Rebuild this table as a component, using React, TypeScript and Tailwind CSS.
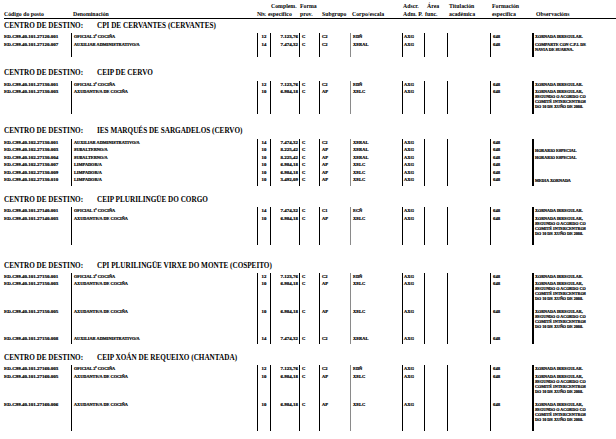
import React from "react";

type Row = {
  code: string;
  den: string;
  niv: string;
  comp: string;
  sub: string;
  corpo: string;
  obs: string[];
  h: string;
};

type Section = {
  name: string;
  mt: string;
  gap: string;
  rows: Row[];
};

const LONG_OBS = [
  "XORNADA IRREGULAR,",
  "SEGUNDO O ACORDO CO",
  "COMITÉ INTERCENTROS",
  "DO 10 DE XUÑO DE 2008.",
];

const sections: Section[] = [
  {
    name: "CPI DE CERVANTES (CERVANTES)",
    mt: "mt-[2.5px]",
    gap: "mb-[2px]",
    rows: [
      { code: "ED.C99.40.101.27120.001", den: "OFICIAL 2ª COCIÑA", niv: "12", comp: "7.123,76", sub: "C2", corpo: "EDÑ", obs: ["XORNADA IRREGULAR."], h: "h-[8px]" },
      { code: "ED.C99.40.101.27120.007", den: "AUXILIAR ADMINISTRATIVO/A", niv: "14", comp: "7.474,32", sub: "C2", corpo: "XERAL", obs: ["COMPARTE CON C.P.I. DE", "NAVIA DE SUARNA."], h: "h-[16.5px]" },
    ],
  },
  {
    name: "CEIP DE CERVO",
    mt: "mt-[12px]",
    gap: "mb-[2.5px]",
    rows: [
      { code: "ED.C99.40.101.27130.001", den: "OFICIAL 2ª COCIÑA", niv: "12", comp: "7.123,76", sub: "C2", corpo: "EDÑ", obs: ["XORNADA IRREGULAR."], h: "h-[7.5px]" },
      { code: "ED.C99.40.101.27130.003", den: "AXUDANTE/A DE COCIÑA", niv: "10", comp: "6.984,18", sub: "AP", corpo: "XELC", obs: LONG_OBS, h: "h-[26px]" },
    ],
  },
  {
    name: "IES MARQUÉS DE SARGADELOS (CERVO)",
    mt: "mt-[13.2px]",
    gap: "mb-[2.75px]",
    rows: [
      { code: "ED.C99.40.102.27130.001", den: "AUXILIAR ADMINISTRATIVO/A", niv: "14", comp: "7.474,32", sub: "C2", corpo: "XERAL", obs: [], h: "h-[7.5px]" },
      { code: "ED.C99.40.102.27130.003", den: "SUBALTERNO/A", niv: "10", comp: "8.225,42", sub: "AP", corpo: "XERAL", obs: ["HORARIO ESPECIAL"], h: "h-[7.5px]" },
      { code: "ED.C99.40.102.27130.004", den: "SUBALTERNO/A", niv: "10", comp: "8.225,42", sub: "AP", corpo: "XERAL", obs: ["HORARIO ESPECIAL"], h: "h-[7.5px]" },
      { code: "ED.C99.40.102.27130.007", den: "LIMPADOR/A", niv: "10", comp: "6.984,18", sub: "AP", corpo: "XELC", obs: [], h: "h-[7.5px]" },
      { code: "ED.C99.40.102.27130.009", den: "LIMPADOR/A", niv: "10", comp: "6.984,18", sub: "AP", corpo: "XELC", obs: [], h: "h-[7.5px]" },
      { code: "ED.C99.40.102.27130.010", den: "LIMPADOR/A", niv: "10", comp: "3.492,09", sub: "AP", corpo: "XELC", obs: ["MEDIA XORNADA"], h: "h-[10px]" },
    ],
  },
  {
    name: "CEIP PLURILINGÜE DO CORGO",
    mt: "mt-[9.5px]",
    gap: "mb-[2.25px]",
    rows: [
      { code: "ED.C99.40.101.27140.001", den: "OFICIAL 1ª COCIÑA", niv: "14", comp: "7.474,32", sub: "C1", corpo: "ECÑ", obs: ["XORNADA IRREGULAR."], h: "h-[8px]" },
      { code: "ED.C99.40.101.27140.003", den: "AXUDANTE/A DE COCIÑA", niv: "10", comp: "6.984,18", sub: "AP", corpo: "XELC", obs: LONG_OBS, h: "h-[30px]" },
    ],
  },
  {
    name: "CPI PLURILINGÜE VIRXE DO MONTE (COSPEITO)",
    mt: "mt-[16.6px]",
    gap: "mb-[1.75px]",
    rows: [
      { code: "ED.C99.40.101.27150.001", den: "OFICIAL 2ª COCIÑA", niv: "12", comp: "7.123,76", sub: "C2", corpo: "EDÑ", obs: ["XORNADA IRREGULAR."], h: "h-[7.5px]" },
      { code: "ED.C99.40.101.27150.003", den: "AXUDANTE/A DE COCIÑA", niv: "10", comp: "6.984,18", sub: "AP", corpo: "XELC", obs: LONG_OBS, h: "h-[28px]" },
      { code: "ED.C99.40.101.27150.005", den: "AXUDANTE/A DE COCIÑA", niv: "10", comp: "6.984,18", sub: "AP", corpo: "XELC", obs: LONG_OBS, h: "h-[27px]" },
      { code: "ED.C99.40.101.27150.008", den: "AUXILIAR ADMINISTRATIVO/A", niv: "14", comp: "7.474,32", sub: "C2", corpo: "XERAL", obs: [], h: "h-[9px]" },
    ],
  },
  {
    name: "CEIP XOÁN DE REQUEIXO (CHANTADA)",
    mt: "mt-[10px]",
    gap: "mb-[2px]",
    rows: [
      { code: "ED.C99.40.101.27160.003", den: "OFICIAL 2ª COCIÑA", niv: "12", comp: "7.123,76", sub: "C2", corpo: "EDÑ", obs: ["XORNADA IRREGULAR."], h: "h-[7.5px]" },
      { code: "ED.C99.40.101.27160.005", den: "AXUDANTE/A DE COCIÑA", niv: "10", comp: "6.984,18", sub: "AP", corpo: "XELC", obs: LONG_OBS, h: "h-[28px]" },
      { code: "ED.C99.40.101.27160.006", den: "AXUDANTE/A DE COCIÑA", niv: "10", comp: "6.984,18", sub: "AP", corpo: "XELC", obs: LONG_OBS, h: "h-[30px]" },
    ],
  },
];

function TableHeader() {
  return (
    <div className="ml-[4px] flex h-[19px] items-end border-b border-black text-[5.8px] leading-[8px] whitespace-nowrap">
      <div className="w-[67px]">Código do posto</div>
      <div className="w-[186px] pl-[2px]">Denominación</div>
      <div className="w-[10px] tracking-[-0.2px]">Niv.</div>
      <div className="flex w-[32px] flex-col pl-[1px]">
        <span className="pl-[3px]">Complem.</span>
        <span>específico</span>
      </div>
      <div className="flex w-[20px] flex-col pl-[1px]">
        <span>Forma</span>
        <span>prov.</span>
      </div>
      <div className="w-[31px] pl-[3px]">Subgrupo</div>
      <div className="w-[52px] pl-[2px]">Corpo/escala</div>
      <div className="flex w-[22px] flex-col pl-[1px]">
        <span>Adscr.</span>
        <span>Adm. P.</span>
      </div>
      <div className="flex w-[23px] flex-col pl-[1px]">
        <span className="pl-[2px]">Área</span>
        <span>func.</span>
      </div>
      <div className="flex w-[43px] flex-col pl-[2px]">
        <span>Titulación</span>
        <span>académica</span>
      </div>
      <div className="flex w-[42px] flex-col pl-[2px]">
        <span>Formación</span>
        <span>específica</span>
      </div>
      <div className="flex-1 pl-[4px]">Observacións</div>
    </div>
  );
}

function DataRow({ row }: { row: Row }) {
  return (
    <div className={`flex ${row.h} leading-[7.5px] whitespace-nowrap [-webkit-text-stroke:0.2px_#000]`}>
      <div className="w-[71px] pl-[4px] text-[5px]">{row.code}</div>
      <div className="w-[186px] border-l border-black pl-[2px] text-[4.3px]">{row.den}</div>
      <div className="w-[13px] border-l border-black text-center text-[4.8px]">{row.niv}</div>
      <div className="w-[29px] border-l border-black pr-[1px] text-right text-[5px]">{row.comp}</div>
      <div className="w-[20px] border-l border-black pl-[2px] text-[4.5px]">C</div>
      <div className="w-[31px] border-l border-black pl-[2px] text-[4.5px]">{row.sub}</div>
      <div className="w-[52px] border-l border-[#8a8a8a] pl-[2px] text-[4.4px]">{row.corpo}</div>
      <div className="w-[22px] border-l border-black pl-[1px] text-[4.5px]">AXG</div>
      <div className="w-[23px] border-l border-black" />
      <div className="w-[43px] border-l border-black" />
      <div className="w-[42px] border-l border-black pl-[2px] text-[4.8px]">648</div>
      <div className="flex flex-1 flex-col border-l-2 border-black pt-[1.25px] pl-[1px] text-[4.1px] leading-[5px]">
        {row.obs.map((line) => (
          <span key={line}>{line}</span>
        ))}
      </div>
    </div>
  );
}

export default function App() {
  return (
    <div className="h-[439px] w-[616px] overflow-hidden bg-white font-['Liberation_Serif',serif] font-bold text-black">
      <TableHeader />
      {sections.map((s) => (
        <div key={s.name} className={s.mt}>
          <div className={`h-[9px] pl-[4px] text-[7.2px] leading-[9px] whitespace-nowrap ${s.gap}`}>
            <span className="inline-block w-[93px]">CENTRO DE DESTINO:</span>
            <span>{s.name}</span>
          </div>
          <div>
            {s.rows.map((r) => (
              <DataRow key={r.code} row={r} />
            ))}
          </div>
        </div>
      ))}
    </div>
  );
}
